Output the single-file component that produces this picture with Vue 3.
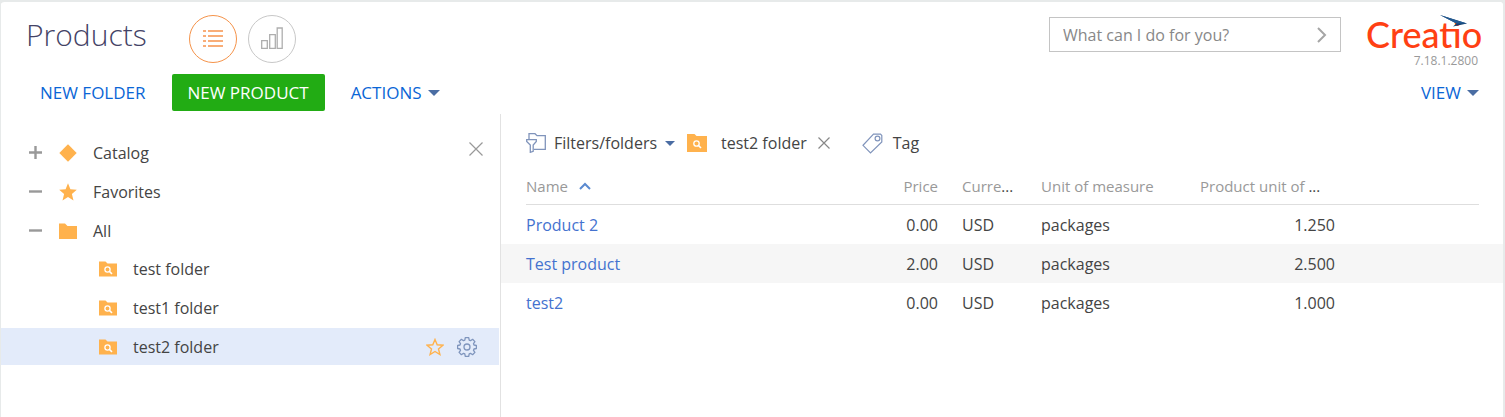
<script setup>
import { ref } from 'vue'

const query = ref('')

const groups = [
  { name: 'Catalog', icon: 'diamond', open: false },
  { name: 'Favorites', icon: 'star', open: true },
  { name: 'All', icon: 'folder', open: true },
]

const folders = ['test folder', 'test1 folder', 'test2 folder']
const selected = ref('test2 folder')

const products = [
  { name: 'Product 2', price: '0.00', currency: 'USD', unit: 'packages', amount: '1.250' },
  { name: 'Test product', price: '2.00', currency: 'USD', unit: 'packages', amount: '2.500' },
  { name: 'test2', price: '0.00', currency: 'USD', unit: 'packages', amount: '1.000' },
]
</script>

<template>
  <div class="page">
    <header class="header">
      <h1 class="title">Products</h1>
      <div class="modes">
        <button class="mode active" type="button" aria-label="List view">
          <svg width="20" height="18" viewBox="0 0 20 18" fill="none" stroke="currentColor" stroke-width="2">
            <path d="M0 1h3M5 1h15M0 6h3M5 6h15M0 11h3M5 11h15M0 16h3M5 16h15" />
          </svg>
        </button>
        <button class="mode" type="button" aria-label="Analytics view">
          <svg width="22" height="24" viewBox="0 0 22 24" fill="none" stroke="#aeaeae" stroke-width="1.300">
            <path d="M.7 13.700h5.600v7.600H.7zM8.700 7.700h5.600v13.600H8.700zM16.200 1h5v20.300h-5z" />
          </svg>
        </button>
      </div>
      <form class="search" @submit.prevent>
        <input v-model="query" type="text" aria-label="What can I do for you?" placeholder="What can I do for you?" />
        <button type="submit" aria-label="Go">
          <svg width="10" height="16" viewBox="0 0 10 16" fill="none" stroke="#a5a5a5" stroke-width="2">
            <path d="M1 1l7 7-7 7" />
          </svg>
        </button>
      </form>
      <div class="brand">
        <div class="logo">
          <span>Creatio</span>
          <svg class="arrow" width="27" height="12" viewBox="0 0 27 12">
            <path d="M0 0L27 8.500 13 11.500 16.500 8.500z" fill="#14406f" />
            <path d="M0 0L27 8.500 16.500 8.500z" fill="#235a92" />
          </svg>
        </div>
        <div class="version">7.18.1.2800</div>
      </div>
    </header>

    <nav class="toolbar">
      <button class="link" type="button">NEW FOLDER</button>
      <button class="primary" type="button">NEW PRODUCT</button>
      <button class="link" type="button">ACTIONS<i class="caret"></i></button>
      <button class="link view" type="button">VIEW<i class="caret"></i></button>
    </nav>

    <div class="content">
      <aside class="tree">
        <button class="icon-btn close" type="button" aria-label="Close folders">
          <svg width="14" height="14" viewBox="0 0 14 14" stroke="#999" stroke-width="1.200"><path d="M.5.5l13 13M13.500.5l-13 13" /></svg>
        </button>
        <ul class="groups">
          <li v-for="g in groups" :key="g.name" class="row">
            <button class="icon-btn toggle" type="button" :aria-label="(g.open ? 'Collapse ' : 'Expand ') + g.name">
              <svg width="13" height="13" viewBox="0 0 13 13" stroke="#999" stroke-width="2.400">
                <path :d="g.open ? 'M0 6.500h13' : 'M0 6.500h13M6.500 0v13'" />
              </svg>
            </button>
            <svg class="group-icon" width="18" height="18" viewBox="0 0 18 18" fill="#ffb24d">
              <path v-if="g.icon === 'diamond'" d="M9 .3L17.700 9 9 17.700.3 9z" />
              <path v-else-if="g.icon === 'star'" d="M9 .3l2.400 6 6.400.4-4.900 4.200 1.600 6.500L9 13.900l-5.500 3.500 1.600-6.500L.2 6.700l6.400-.4z" />
              <path v-else d="M0 1.500h6l2.500 2.500H18v13H0z" />
            </svg>
            <span>{{ g.name }}</span>
          </li>
        </ul>
        <ul class="folders">
          <li v-for="f in folders" :key="f" class="row" :class="{ selected: f === selected }">
            <svg class="group-icon" width="18" height="16" viewBox="0 0 18 16">
              <path d="M0 .5h6.500L8.500 2.500H18V15.500H0z" fill="#ffb24d" />
              <circle cx="8.500" cy="8.500" r="2.600" fill="none" stroke="#fff" stroke-width="1.300" />
              <path d="M10.500 10.500l2.500 2.300" stroke="#fff" stroke-width="1.600" />
            </svg>
            <span>{{ f }}</span>
            <div v-if="f === selected" class="row-tools">
              <button class="icon-btn" type="button" aria-label="Add to favorites">
                <svg width="18" height="18" viewBox="0 0 18 18" fill="none" stroke="#ffb24d" stroke-width="1.400">
                  <path d="M9 1.500l2.200 5.300 5.700.4-4.400 3.700 1.400 5.600L9 13.500l-4.900 3 1.400-5.600L1.100 7.200l5.700-.4z" />
                </svg>
              </button>
              <button class="icon-btn" type="button" aria-label="Folder settings">
                <svg width="20" height="20" viewBox="0 0 20 20" fill="none" stroke="#7f95bd" stroke-width="1.300" stroke-linejoin="round">
                  <path d="M8.300.7h3.400l.5 2.400 1.300.6 2.100-1.400 2.300 2.300-1.400 2.100.5 1.300 2.400.5v3l-2.400.5-.5 1.300 1.400 2.100-2.300 2.300-2.100-1.400-1.300.6-.5 2.400H8.300l-.5-2.400-1.300-.6-2.100 1.400-2.300-2.300 1.400-2.100-.5-1.300-2.400-.5v-3L3 8l.5-1.300-1.400-2.100 2.300-2.300 2.100 1.400 1.300-.6z" />
                  <circle cx="10" cy="10" r="3" />
                </svg>
              </button>
            </div>
          </li>
        </ul>
      </aside>

      <main class="main">
        <div class="filters">
          <button class="filter" type="button">
            <svg width="20" height="20" viewBox="0 0 20 20" fill="none" stroke="#8094bb" stroke-width="1.300">
              <path d="M3 6V.7h6l2 2h8.300v13.600H8" />
              <path d="M.7 6.700h9.600v1.800L7.200 12v6.300l-2.900 1V12L.7 8.500z" />
            </svg>
            Filters/folders<i class="caret small"></i>
          </button>
          <div class="applied">
            <svg width="20" height="18" viewBox="0 0 20 18">
              <path d="M0 0h7.500l2 2H20v16H0z" fill="#ffb24d" />
              <circle cx="9.500" cy="9.500" r="2.700" fill="none" stroke="#fff" stroke-width="1.300" />
              <path d="M11.500 11.500l2.500 2.500" stroke="#fff" stroke-width="1.600" />
            </svg>
            <span>test2 folder</span>
            <button class="icon-btn" type="button" aria-label="Remove filter">
              <svg width="12" height="12" viewBox="0 0 12 12" stroke="#888" stroke-width="1.200"><path d="M.5.5l11 11M11.500.5l-11 11" /></svg>
            </button>
          </div>
          <button class="filter tag" type="button">
            <svg width="21" height="21" viewBox="0 0 21 21" fill="none" stroke="#8094bb" stroke-width="1.200">
              <path d="M11.500 1.200h7l1.300 1.300v6.500L8.500 20 1 12.300z" />
              <circle cx="15.500" cy="5.500" r="2.400" />
            </svg>
            Tag
          </button>
        </div>

        <table class="grid">
          <colgroup>
            <col />
            <col class="c-short" />
            <col class="c-short" />
            <col class="c-long" />
            <col class="c-long" />
            <col class="c-rest" />
          </colgroup>
          <thead>
            <tr>
              <th class="first">
                <div><span>Name</span>
                  <svg class="sort" width="12" height="8" viewBox="0 0 12 8" fill="none" stroke="#5a8ad0" stroke-width="2"><path d="M1 7l5-5 5 5" /></svg>
                </div>
              </th>
              <th class="num"><div><span>Price</span></div></th>
              <th><div><span>Curre</span>...</div></th>
              <th><div><span>Unit of measure</span></div></th>
              <th><div><span>Product unit of</span> ...</div></th>
              <td class="last"><div></div></td>
            </tr>
          </thead>
          <tbody>
            <tr v-for="p in products" :key="p.name">
              <td class="first"><a href="#">{{ p.name }}</a></td>
              <td class="num">{{ p.price }}</td>
              <td>{{ p.currency }}</td>
              <td>{{ p.unit }}</td>
              <td class="num">{{ p.amount }}</td>
              <td></td>
            </tr>
          </tbody>
        </table>
      </main>
    </div>
  </div>
</template>

<style>
html,
body {
  height: 100%;
  background: #e7eaea;
}
#app {
  height: 100%;
}
</style>

<style scoped>
.page {
  box-sizing: border-box;
  min-height: 100%;
  display: flex;
  flex-direction: column;
  border: solid #e7eaea;
  border-width: 2px 2px 0 1px;
  border-radius: 4px 4px 0 0;
  background: #fff;
  background-clip: padding-box;
  font: 16px/24px "Open Sans", "Noto Sans", sans-serif;
  color: #444;
}
button {
  display: inline-flex;
  align-items: center;
  padding: 0;
  border: 0;
  background: none;
  font: inherit;
  color: inherit;
  cursor: pointer;
}
svg {
  display: block;
  flex: none;
}
.header {
  display: flex;
  align-items: flex-start;
  padding: 13px 22px 0 25px;
  height: 59px;
}
.title {
  margin: 0;
  width: 163px;
  font-size: 30px;
  font-weight: 300;
  line-height: 40px;
  color: #444366;
}
.modes {
  display: flex;
  gap: 11px;
}
.mode {
  box-sizing: border-box;
  width: 48px;
  height: 48px;
  justify-content: center;
  border: 1px solid #c8c8c8;
  border-radius: 50%;
}
.mode.active {
  border-color: #f5934a;
  color: #f8ad78;
}
.search {
  box-sizing: border-box;
  display: flex;
  align-items: center;
  width: 292px;
  height: 35px;
  margin: 2px 25px 0 auto;
  padding: 0 13px;
  border: 1px solid #c4c4c4;
}
.search input {
  flex: 1;
  min-width: 0;
  padding: 0;
  border: 0;
  outline: 0;
  font: inherit;
  color: #444;
}
.search input::placeholder {
  color: #888;
  opacity: 1;
}
.brand {
  width: 115px;
}
.logo {
  position: relative;
  font: 500 36px/38px Lato, "Open Sans", sans-serif;
  color: #ff4013;
  white-space: nowrap;
}
.arrow {
  position: absolute;
  left: 74px;
  top: 0;
}
.version {
  padding-right: 3px;
  text-align: right;
  font-size: 12px;
  line-height: 16px;
  color: #999;
}
.toolbar {
  display: flex;
  align-items: center;
  gap: 26px;
  padding: 0 24px 3px 39px;
  font-size: 17px;
}
.link {
  color: #0a66d6;
}
.view {
  margin-left: auto;
}
.primary {
  height: 37px;
  padding: 0 16px;
  border-radius: 2px;
  background: #22ac14;
  color: #fff;
}
.caret {
  margin-left: 6px;
  border: solid transparent;
  border-width: 6px 6px 0;
  border-top-color: #4a6da3;
}
.caret.small {
  border-width: 5px 5px 0;
  border-top-color: #4a6da3;
}
.content {
  flex: 1;
  display: flex;
}
.tree {
  position: relative;
  box-sizing: border-box;
  width: 500px;
  padding-top: 20px;
  padding-right: 1px;
  border-right: 1px solid #e2e2e2;
}
.close {
  position: absolute;
  right: 17px;
  top: 28px;
}
.groups,
.folders {
  display: flex;
  flex-direction: column;
  margin: 0;
  padding: 0;
  list-style: none;
}
.groups {
  gap: 2px;
}
.folders {
  gap: 2px;
  margin-top: 1px;
}
.row {
  display: flex;
  align-items: center;
  height: 37px;
  padding-left: 28px;
}
.toggle {
  margin-right: 17px;
}
.group-icon {
  margin-right: 16px;
}
.folders .row {
  padding-left: 98px;
  padding-right: 22px;
}
.selected {
  background: #e3ebfa;
}
.row-tools {
  display: flex;
  align-items: center;
  gap: 13px;
  margin-left: auto;
}
.main {
  flex: 1;
  min-width: 0;
}
.filters {
  display: flex;
  align-items: center;
  height: 36px;
  padding: 11px 25px 7px;
}
.filter {
  gap: 8px;
}
.filter .caret {
  margin-left: 0;
}
.applied {
  display: flex;
  align-items: center;
  margin-left: 12px;
}
.applied span {
  margin: 0 11px 0 14px;
}
.tag {
  margin-left: 32px;
  gap: 10px;
}
.grid {
  width: 100%;
  table-layout: fixed;
  border-collapse: collapse;
}
.c-short {
  width: 79px;
}
.c-long {
  width: 159px;
}
.c-rest {
  width: 156px;
}
th,
td {
  padding: 0 12px;
  text-align: left;
  font-weight: 400;
}
thead th,
thead td {
  padding: 0;
}
thead div {
  box-sizing: border-box;
  height: 37px;
  padding: 0 12px;
  border-bottom: 1px solid #dedede;
  font-size: 15px;
  line-height: 36px;
  white-space: nowrap;
}
thead span {
  color: #999;
}
thead .first {
  padding-left: 25px;
}
thead .first div {
  display: flex;
  align-items: center;
  gap: 11px;
  padding-left: 0;
}
thead .last {
  padding-right: 24px;
}
tbody td {
  height: 39px;
}
tbody .first {
  padding-left: 25px;
}
tbody tr:nth-child(even) {
  background: #f6f6f6;
}
.num {
  text-align: right;
}
a {
  color: #4472cf;
  text-decoration: none;
}
</style>
